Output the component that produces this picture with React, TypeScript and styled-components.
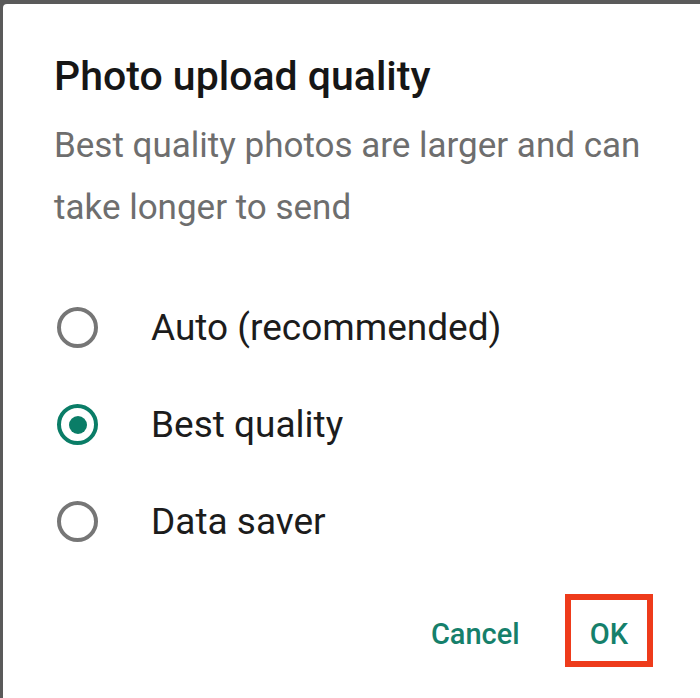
import styled, { createGlobalStyle } from "styled-components";
import { useState } from "react";

const GlobalStyle = createGlobalStyle`
  html, body {
    margin: 0;
    padding: 0;
    background: #5a5a5a;
  }
  * {
    box-sizing: border-box;
  }
`;

const Screen = styled.div`
  width: 700px;
  height: 698px;
  padding: 4px 0 0 3px;
  background: #5a5a5a;
  overflow: hidden;
`;

const Dialog = styled.div`
  width: 697px;
  height: 694px;
  background: #ffffff;
  border-top-left-radius: 4px;
  padding: 48px 0 0 51px;
  font-family: Roboto, "Noto Sans", sans-serif;
  display: flex;
  flex-direction: column;
`;

const Title = styled.h1`
  margin: 0;
  font-size: 41px;
  font-weight: 500;
  line-height: 48px;
  color: #161616;
  letter-spacing: 0;
`;

const Subtitle = styled.p`
  margin: 15px 0 0;
  max-width: 600px;
  font-size: 35px;
  font-weight: 400;
  line-height: 62px;
  color: #6e6e6e;
`;

const Options = styled.div`
  display: flex;
  flex-direction: column;
  margin-top: 40px;
`;

const Option = styled.label`
  display: flex;
  align-items: center;
  height: 97px;
  cursor: pointer;
`;

const Radio = styled.span<{ $checked: boolean }>`
  width: 41px;
  height: 41px;
  margin-left: 3px;
  border-radius: 50%;
  border: 4px solid ${(p) => (p.$checked ? "#0a7d67" : "#767676")};
  display: flex;
  align-items: center;
  justify-content: center;
  flex-shrink: 0;
  &::after {
    content: "";
    width: 18px;
    height: 18px;
    border-radius: 50%;
    background: #0a7d67;
    display: ${(p) => (p.$checked ? "block" : "none")};
  }
`;

const OptionLabel = styled.span`
  margin-left: 53px;
  font-size: 37px;
  line-height: normal;
  color: #1c1c1c;
`;

const Actions = styled.div`
  display: flex;
  justify-content: flex-end;
  align-items: center;
  gap: 39px;
  margin-top: 24px;
  padding-right: 47px;
`;

const ActionButton = styled.button<{ $highlight?: boolean }>`
  font-family: Roboto, "Noto Sans", sans-serif;
  font-size: 29px;
  font-weight: 500;
  color: #15806b;
  background: transparent;
  border: 6px solid ${(p) => (p.$highlight ? "#ee3b1b" : "transparent")};
  padding: 7px ${(p) => (p.$highlight ? "19px" : "0")} 0;
  height: 73px;
  cursor: pointer;
`;

const options = ["Auto (recommended)", "Best quality", "Data saver"];

export default function App() {
  const [selected, setSelected] = useState(1);
  return (
    <Screen>
      <GlobalStyle />
      <Dialog>
        <Title>Photo upload quality</Title>
        <Subtitle>Best quality photos are larger and can take longer to send</Subtitle>
        <Options>
          {options.map((label, i) => (
            <Option key={label} onClick={() => setSelected(i)}>
              <Radio $checked={selected === i} />
              <OptionLabel>{label}</OptionLabel>
            </Option>
          ))}
        </Options>
        <Actions>
          <ActionButton>Cancel</ActionButton>
          <ActionButton $highlight>OK</ActionButton>
        </Actions>
      </Dialog>
    </Screen>
  );
}
